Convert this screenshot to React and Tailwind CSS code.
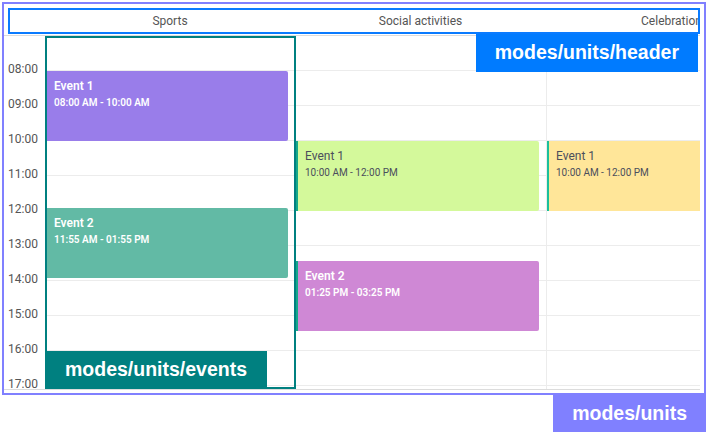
import React from "react";

const HOURS = ["08:00", "09:00", "10:00", "11:00", "12:00", "13:00", "14:00", "15:00", "16:00", "17:00"];

const ROW = 35;
const START = 7;

const units = [
  {
    name: "Sports",
    width: "w-[250px]",
    events: [
      { title: "Event 1", time: "08:00 AM - 10:00 AM", start: 8, end: 10, bg: "bg-[#997dea]", bar: "border-[#16a085]", dark: false },
      { title: "Event 2", time: "11:55 AM - 01:55 PM", start: 11 + 55 / 60, end: 13 + 55 / 60, bg: "bg-[#62baa5]", bar: "border-[#16a085]", dark: false },
    ],
  },
  {
    name: "Social activities",
    width: "w-[251px] border-l border-[#ececec]",
    events: [
      { title: "Event 1", time: "10:00 AM - 12:00 PM", start: 10, end: 12, bg: "bg-[#d4f99b]", bar: "border-[#14a88a]", dark: true },
      { title: "Event 2", time: "01:25 PM - 03:25 PM", start: 13 + 25 / 60, end: 15 + 25 / 60, bg: "bg-[#cf88d5]", bar: "border-[#14a88a]", dark: false },
    ],
  },
  {
    name: "Celebration",
    width: "w-[251px] border-l border-[#ececec]",
    events: [
      { title: "Event 1", time: "10:00 AM - 12:00 PM", start: 10, end: 12, bg: "bg-[#ffe699]", bar: "border-[#1cc09b]", dark: true },
    ],
  },
];

function EventCard({ ev }) {
  const top = (ev.start - START) * ROW;
  const height = (ev.end - ev.start) * ROW;
  return (
    <div
      className={`absolute left-0 w-[243px] rounded-r-[2px] border-l-2 pl-[7px] pt-[8px] ${ev.bg} ${ev.bar} ${
        ev.dark ? "text-[#4b4e5c]" : "text-white"
      }`}
      style={{ top, height }}
    >
      <div className={`text-[12px] leading-[14px] ${ev.dark ? "font-normal" : "font-semibold"}`}>{ev.title}</div>
      <div className={`mt-[4px] text-[10px] leading-[12px] ${ev.dark ? "font-normal" : "font-semibold"}`}>
        {ev.time}
      </div>
    </div>
  );
}

export default function App() {
  return (
    <div className="w-[708px] h-[438px] bg-white pl-[2px] pt-[2px] font-['Roboto',sans-serif] overflow-hidden">
      <div className="w-[704px]">
        {/* units view frame */}
        <div className="relative h-[393px] border-2 border-[#8080ff] overflow-hidden">
          {/* unit header */}
          <div className="ml-[4px] mt-[4px] w-[692px] h-[26px] border-2 border-[#0a7bff] overflow-hidden">
            <div className="flex h-full text-[12px] leading-[22px] text-[#555]">
              <div className="w-[35px] shrink-0" />
              {units.map((u) => (
                <div key={u.name} className={`${u.name === "Sports" ? "w-[250px]" : "w-[251px]"} shrink-0 text-center whitespace-nowrap`}>
                  {u.name}
                </div>
              ))}
            </div>
          </div>

          {/* body */}
          <div className="mt-px w-[696px] h-[355px] flex border-t border-b border-[#dcdcdc]">
            <div className="w-[41px] shrink-0 overflow-hidden pt-[15px] pl-[4px]">
              {HOURS.map((h) => (
                <div key={h} className="h-[35px] flex items-center text-[12px] leading-[14px] text-[#555]">
                  {h}
                </div>
              ))}
            </div>
            <div className="flex-1 flex overflow-hidden">
              {units.map((u) => (
                <div key={u.name} className={`${u.width} shrink-0 relative flex flex-col`}>
                  {Array.from({ length: 11 }).map((_, i) => (
                    <div key={i} className="h-[35px] shrink-0 border-b border-[#ececec]" />
                  ))}
                  {u.events.map((ev) => (
                    <EventCard key={ev.title + ev.time} ev={ev} />
                  ))}
                </div>
              ))}
            </div>
          </div>

          {/* header annotation */}
          <div className="absolute top-[30px] right-[6px] h-[38px] px-[19px] flex items-center bg-[#007bff] text-white font-['Liberation_Sans',Arial,sans-serif] font-bold text-[19.5px]">
            modes/units/header
          </div>

          {/* events annotation */}
          <div className="absolute left-[41px] top-[32px] w-[251px] h-[353px] border-2 border-[#008080]" />
          <div className="absolute left-[41px] top-[347px] h-[37px] px-[20px] flex items-center bg-[#008080] text-white font-['Liberation_Sans',Arial,sans-serif] font-bold text-[19.5px]">
            modes/units/events
          </div>
        </div>

        <div className="flex justify-end">
          <div className="h-[37px] px-[19px] flex items-center bg-[#8080ff] text-white font-['Liberation_Sans',Arial,sans-serif] font-bold text-[19.5px]">
            modes/units
          </div>
        </div>
      </div>
    </div>
  );
}
